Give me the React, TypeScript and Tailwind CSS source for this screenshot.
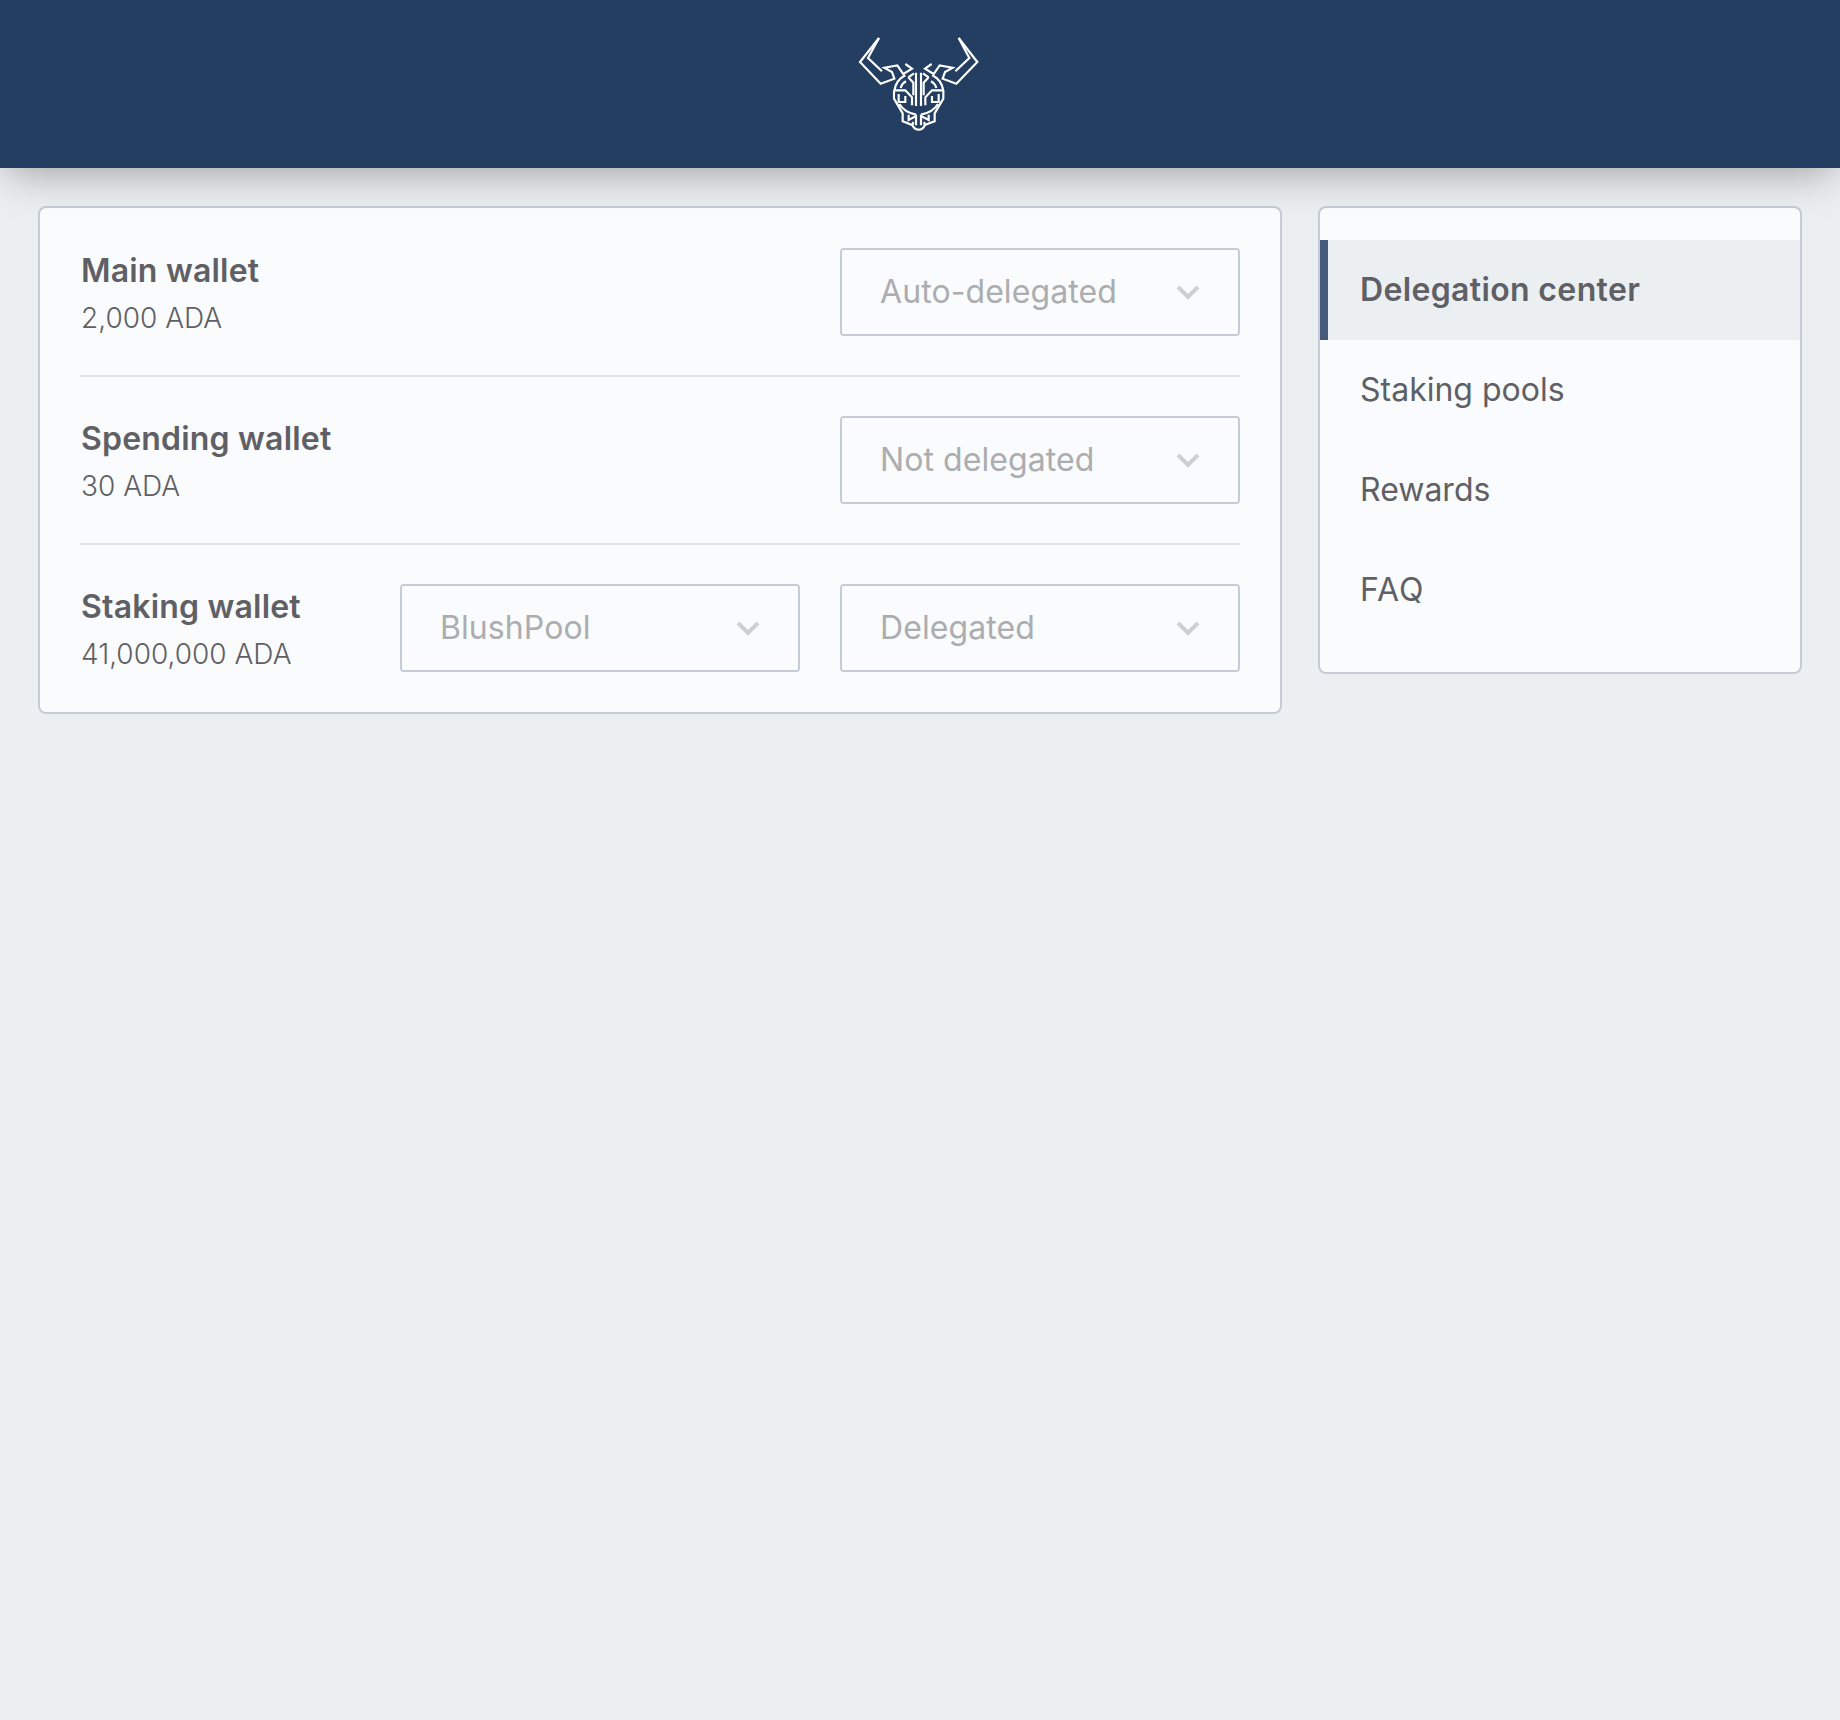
import React from "react";

const font = { fontFamily: "Inter, sans-serif" };

function Logo() {
  return (
    <svg width="160" height="120" viewBox="0 0 480 360" fill="none" stroke="#fff" strokeWidth="6.5" strokeLinejoin="miter" strokeLinecap="butt">
      <path d="M117 54 L60 126 L122 191 L163 176 L156 156 L133 143 L172 136 L190 162 L216 146 L196 132" />
      <path d="M117 54 L84 114 L126 154" />
      <path d="M356 54 L412 126 L349 191 L308 176 L315 156 L338 143 L299 136 L281 162 L255 146 L275 132" />
      <path d="M356 54 L388 114 L346 154" />
      <path d="M163 212 Q168 180 196 166 M310 212 Q305 180 277 166" />
      <path d="M228 158 V258 M243 158 V258" />
      <path d="M205 172 L222 160 M266 172 L249 160" />
      <path d="M205 172 L220 188 V226 M266 172 L251 188 V226" />
      <path d="M182 204 Q186 190 198 184 M289 204 Q285 190 273 184" />
      <path d="M162 211 H196 L216 232 V256 M310 211 H276 L256 232 V256" />
      <path d="M162 211 V236 L188 280 V304 L218 316 M310 211 V236 L284 280 V304 L252 316" />
      <path d="M176 222 V246 H196 V228 M296 222 V246 H276 V228" />
      <path d="M178 252 Q192 276 228 284 M294 252 Q280 276 243 284" />
      <path d="M206 284 V300 L228 288 V316 M266 284 V300 L243 288 V316" />
      <path d="M220 306 A18 16 0 1 0 252 306" />
    </svg>
  );
}

function Chevron() {
  return (
    <svg width="24" height="16" viewBox="0 0 24 16" fill="none" stroke="#cdcfd1" strokeWidth="4" className="shrink-0">
      <path d="M2 3 L12 13 L22 3" />
    </svg>
  );
}

function Select({ label }: { label: string }) {
  return (
    <div className="flex h-[88px] w-[400px] shrink-0 items-center justify-between rounded-[4px] border-2 border-[#c6ccd7] pl-[38px] pr-[38px] text-[32px] tracking-[0.08px] text-[#abadb0]">
      <span>{label}</span>
      <Chevron />
    </div>
  );
}

function WalletRow({ name, amount, selects, last }: { name: string; amount: string; selects: string[]; last?: boolean }) {
  return (
    <div className={last ? "flex h-[168px] items-center" : "flex h-[168px] items-center shadow-[0_1px_0_#e1e5ea,inset_0_-1px_0_#e1e5ea]"}>
      <div className="flex-1 pl-[1px] pt-[2px]">
        <div className="text-[32px] font-semibold leading-[44px] tracking-[0.2px] text-[#5f6066]">{name}</div>
        <div className="mt-[5px] text-[28px] font-light leading-[40px] text-[#5f6066]">{amount}</div>
      </div>
      <div className="flex gap-[40px]">
        {selects.map((s) => (
          <Select key={s} label={s} />
        ))}
      </div>
    </div>
  );
}

function NavItem({ label, active, wide }: { label: string; active?: boolean; wide?: boolean }) {
  if (active) {
    return (
      <div className="flex h-[100px] items-center border-l-8 border-[#475a7c] bg-[#eceff1] pl-[32px] text-[32px] font-semibold tracking-[0.35px] text-[#5f6066]">
        {label}
      </div>
    );
  }
  return (
    <div className={wide ? "flex h-[100px] items-center pl-[40px] text-[32px] tracking-[1px] text-[#5f6066]" : "flex h-[100px] items-center pl-[40px] text-[32px] text-[#5f6066]"}>
      {label}
    </div>
  );
}

export default function App() {
  return (
    <div style={font} className="min-h-[1720px] bg-[#eceff1]">
      <header className="relative flex h-[168px] items-center justify-center bg-[#243e62] pb-[8px] shadow-[0_12px_40px_-8px_rgba(0,0,0,0.35)]">
        <Logo />
      </header>
      <main className="flex items-start gap-[36px] pl-[38px] pr-[38px] pt-[38px]">
        <section className="w-[1244px] rounded-[8px] border-2 border-[#c6ccd7] bg-[#fafbfc] px-[40px]">
          <WalletRow name="Main wallet" amount="2,000 ADA" selects={["Auto-delegated"]} />
          <WalletRow name="Spending wallet" amount="30 ADA" selects={["Not delegated"]} />
          <WalletRow name="Staking wallet" amount="41,000,000 ADA" selects={["BlushPool", "Delegated"]} last />
        </section>
        <aside className="flex-1 rounded-[8px] border-2 border-[#c6ccd7] bg-[#fafbfc] py-[32px]">
          <NavItem label="Delegation center" active />
          <NavItem label="Staking pools" />
          <NavItem label="Rewards" />
          <NavItem label="FAQ" wide />
        </aside>
      </main>
    </div>
  );
}
